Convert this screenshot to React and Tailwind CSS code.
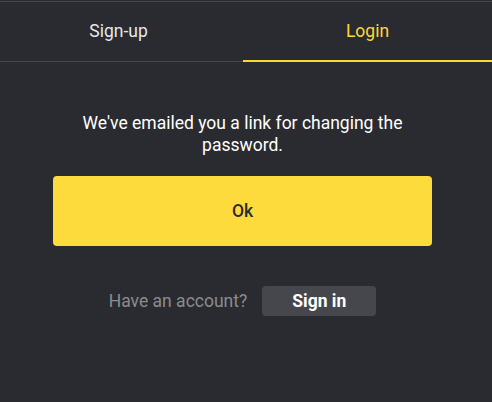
export default function App() {
  return (
    <div className="w-[492px] h-[402px] bg-[#2a2b30] font-['Roboto',sans-serif] overflow-hidden">
      <div className="h-px bg-[#2a2b30]" />
      <div className="h-px bg-[#46474b]" />
      <div className="flex h-[60px] border-b border-[#46474b]">
        <div className="w-[243px] flex items-center justify-center pr-[6px] text-[17.5px] text-[#e6e7ea]">
          Sign-up
        </div>
        <div className="flex-1 flex items-center justify-center text-[17.5px] text-[#fdd835] border-b-2 border-[#fdd835] mb-[-1px]">
          Login
        </div>
      </div>
      <div className="w-[379px] ml-[53px]">
        <p className="mt-[50px] text-center text-[17.5px] leading-[22px] text-white px-[16px]">
          We've emailed you a link for changing the password.
        </p>
        <button className="mt-[20px] w-full h-[70px] rounded-[4px] bg-[#fedb3c] text-[#2a2b30] font-medium text-[17.5px]">
          Ok
        </button>
        <div className="mt-[40px] flex items-center justify-center gap-[15px]">
          <span className="text-[17.5px] text-[#8b8c91]">Have an account?</span>
          <button className="w-[114px] h-[30px] rounded-[4px] bg-[#46474c] text-white font-bold text-[17.5px]">
            Sign in
          </button>
        </div>
      </div>
    </div>
  );
}
